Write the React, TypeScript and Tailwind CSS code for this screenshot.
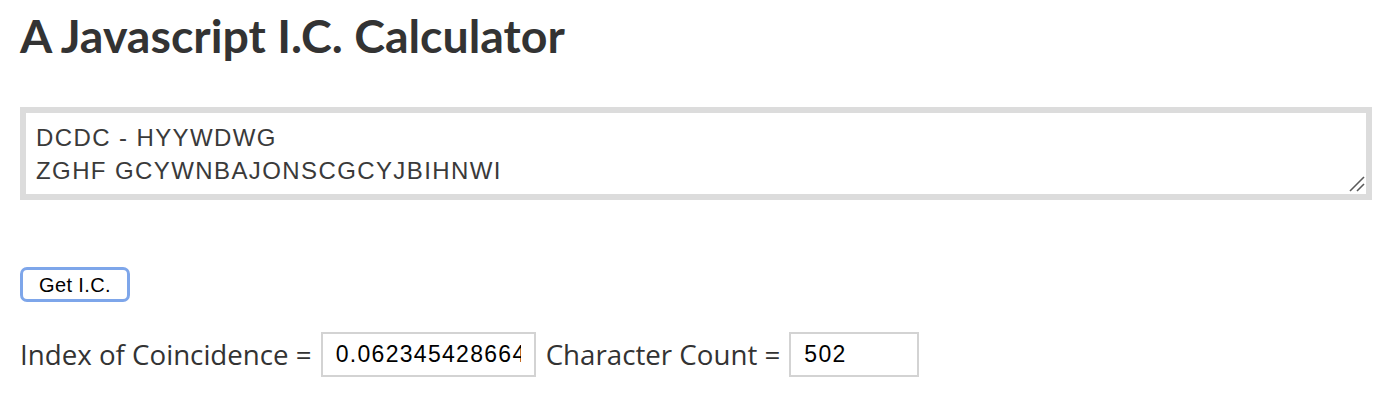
import React from "react";

export default function App() {
  return (
    <div className="w-[1396px] h-[406px] bg-white px-5 text-[#333]">
      <h1 className="pt-[9px] text-[46.5px] leading-[52px] font-bold text-[#333] [font-family:Lato,'Open_Sans',sans-serif]">
        A Javascript I.C. Calculator
      </h1>
      <div className="mt-[46px] relative w-[1352px]">
        <textarea
          readOnly
          className="block w-[1352px] h-[93px] border-[6px] border-[#dcdcdc] bg-white pt-[8px] pb-[5px] pl-[10px] pr-[10px] text-[24px] leading-[33px] tracking-[1.4px] text-[#3a3a3a] [font-family:'Liberation_Sans',Arial,sans-serif] outline-none resize-none overflow-hidden"
          defaultValue={"DCDC - HYYWDWG\nZGHF GCYWNBAJONSCGCYJBIHNWI"}
        />
        <svg
          className="absolute right-[6px] bottom-[6px] pointer-events-none"
          width="20"
          height="20"
          viewBox="0 0 20 20"
        >
          <line x1="18" y1="3" x2="4" y2="17" stroke="#5a5a5a" strokeWidth="1.6" />
          <line x1="18" y1="10" x2="11" y2="17" stroke="#5a5a5a" strokeWidth="1.6" />
        </svg>
      </div>
      <div className="mt-[67px]">
        <button className="flex items-center justify-center w-[110px] h-[35px] rounded-[7px] border-[3px] border-[#7ea6ea] bg-white text-[20px] tracking-[0.4px] text-black [font-family:'Liberation_Sans',Arial,sans-serif]">
          Get I.C.
        </button>
      </div>
      <div className="mt-[30px] flex items-center text-[27.7px] text-[#333] [font-family:'Open_Sans',sans-serif]">
        <span>Index of Coincidence =</span>
        <input
          readOnly
          value="0.06234542866433816"
          className="ml-[9px] w-[215px] h-[45px] border-2 border-[#d3d3d3] px-[13px] text-[23px] tracking-[1.3px] text-black [font-family:'Liberation_Sans',Arial,sans-serif] outline-none"
        />
        <span className="ml-[10px]">Character Count =</span>
        <input
          readOnly
          value="502"
          className="ml-[9px] w-[130px] h-[45px] border-2 border-[#d3d3d3] px-[13px] text-[23px] tracking-[1.3px] text-black [font-family:'Liberation_Sans',Arial,sans-serif] outline-none"
        />
      </div>
    </div>
  );
}
